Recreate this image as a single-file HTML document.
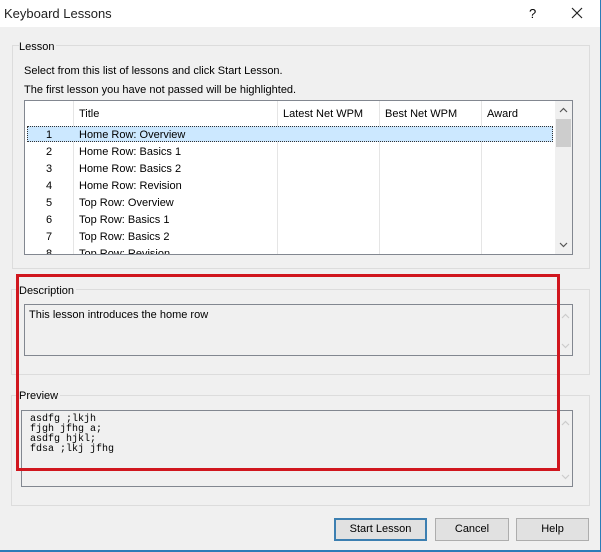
<!DOCTYPE html>
<html><head><style>
*{margin:0;padding:0;box-sizing:border-box}
body{width:601px;height:552px;background:#f0f0f0;font-family:"Liberation Sans",sans-serif;font-size:11px;color:#000;position:relative;overflow:hidden}
.a{position:absolute;white-space:nowrap}
.grp{position:absolute;border:1px solid #dcdcdc}
.lbl{position:absolute;background:#f0f0f0;padding-right:2px}
.box{position:absolute;border:1px solid #828790;background:#f0f0f0}
.col{position:absolute;top:0;bottom:0;border-left:1px solid #e5e5e5}
.row{position:absolute;left:0;height:17px;line-height:17px}
.btn{position:absolute;top:518px;height:23px;border:1px solid #adadad;background:#e1e1e1;text-align:center;line-height:21px}
.mono{font-family:"Liberation Mono",monospace;font-size:10px;line-height:10px}
</style></head><body>
<div class="a" style="left:0;top:0;width:601px;height:27px;background:#fff"></div>
<div class="a" style="left:4px;top:6px;font-size:13px;color:#222">Keyboard Lessons</div>
<div class="a" style="left:529px;top:6px;font-size:13px">?</div>
<svg class="a" style="left:571px;top:7px" width="12" height="12"><path d="M1 1L11 11M11 1L1 11" stroke="#222" stroke-width="1.2"/></svg>
<div class="a" style="right:0;top:0;width:1px;height:552px;background:#2b7cb8"></div>
<div class="a" style="left:0;bottom:0;width:601px;height:2px;background:#2b7cb8"></div>

<div class="grp" style="left:12px;top:45px;width:578px;height:224px"></div>
<div class="lbl" style="left:19px;top:41px">Lesson</div>
<div class="a" style="left:24px;top:65px">Select from this list of lessons and click Start Lesson.</div>
<div class="a" style="left:24px;top:84px">The first lesson you have not passed will be highlighted.</div>
<div class="box" style="left:24px;top:100px;width:549px;height:155px;background:#fff;overflow:hidden">
 <div class="col" style="left:48px"></div><div class="col" style="left:252px"></div><div class="col" style="left:354px"></div><div class="col" style="left:456px"></div>
 <div class="a" style="left:54px;top:7px">Title</div><div class="a" style="left:258px;top:7px">Latest Net WPM</div><div class="a" style="left:360px;top:7px">Best Net WPM</div><div class="a" style="left:462px;top:7px">Award</div>
 <div class="a" style="left:2px;top:25px;width:526px;height:16px;background:#cce8ff;border:1px dotted #333"></div>
 <div class="a" style="left:530px;top:0;width:17px;height:153px;background:#f0f0f0"></div>
 <div class="a" style="left:531px;top:18px;width:15px;height:28px;background:#cdcdcd"></div>
 <svg class="a" style="left:534px;top:6px" width="9" height="6"><path d="M1 5L4.5 1.5L8 5" stroke="#555" fill="none" stroke-width="1.2"/></svg>
 <svg class="a" style="left:534px;top:141px" width="9" height="6"><path d="M1 1L4.5 4.5L8 1" stroke="#555" fill="none" stroke-width="1.2"/></svg>
 <div style="position:absolute;left:0;top:26px;width:530px">
 <div class="row" style="top:0"><span class="a" style="left:21px">1</span><span class="a" style="left:54px">Home Row: Overview</span></div>
 <div class="row" style="top:17px"><span class="a" style="left:21px">2</span><span class="a" style="left:54px">Home Row: Basics 1</span></div>
 <div class="row" style="top:34px"><span class="a" style="left:21px">3</span><span class="a" style="left:54px">Home Row: Basics 2</span></div>
 <div class="row" style="top:51px"><span class="a" style="left:21px">4</span><span class="a" style="left:54px">Home Row: Revision</span></div>
 <div class="row" style="top:68px"><span class="a" style="left:21px">5</span><span class="a" style="left:54px">Top Row: Overview</span></div>
 <div class="row" style="top:85px"><span class="a" style="left:21px">6</span><span class="a" style="left:54px">Top Row: Basics 1</span></div>
 <div class="row" style="top:102px"><span class="a" style="left:21px">7</span><span class="a" style="left:54px">Top Row: Basics 2</span></div>
 <div class="row" style="top:119px"><span class="a" style="left:21px">8</span><span class="a" style="left:54px">Top Row: Revision</span></div>
 </div>
</div>

<div class="grp" style="left:11px;top:289px;width:579px;height:86px"></div>
<div class="lbl" style="left:19px;top:285px">Description</div>
<div class="box" style="left:24px;top:304px;width:549px;height:52px"><div class="a" style="left:4px;top:4px">This lesson introduces the home row</div>
<svg class="a" style="left:536px;top:8px" width="9" height="6"><path d="M1 5L4.5 1.5L8 5" stroke="#ccc" fill="none" stroke-width="1.2"/></svg>
<svg class="a" style="left:536px;top:38px" width="9" height="6"><path d="M1 1L4.5 4.5L8 1" stroke="#ccc" fill="none" stroke-width="1.2"/></svg></div>

<div class="grp" style="left:11px;top:395px;width:579px;height:111px"></div>
<div class="lbl" style="left:19px;top:390px">Preview</div>
<div class="box" style="left:21px;top:410px;width:552px;height:77px"><div class="a mono" style="left:8px;top:4px">asdfg ;lkjh<br>fjgh jfhg a;<br>asdfg hjkl;<br>fdsa ;lkj jfhg</div>
<svg class="a" style="left:539px;top:9px" width="9" height="6"><path d="M1 5L4.5 1.5L8 5" stroke="#ccc" fill="none" stroke-width="1.2"/></svg>
<svg class="a" style="left:539px;top:63px" width="9" height="6"><path d="M1 1L4.5 4.5L8 1" stroke="#ccc" fill="none" stroke-width="1.2"/></svg></div>

<div class="a" style="left:16px;top:274px;width:544px;height:197px;border:3px solid #d0161e"></div>

<div class="btn" style="left:334px;width:93px;border:2px solid #3c7fb1;line-height:19px">Start Lesson</div>
<div class="btn" style="left:435px;width:74px">Cancel</div>
<div class="btn" style="left:516px;width:73px">Help</div>
</body></html>
